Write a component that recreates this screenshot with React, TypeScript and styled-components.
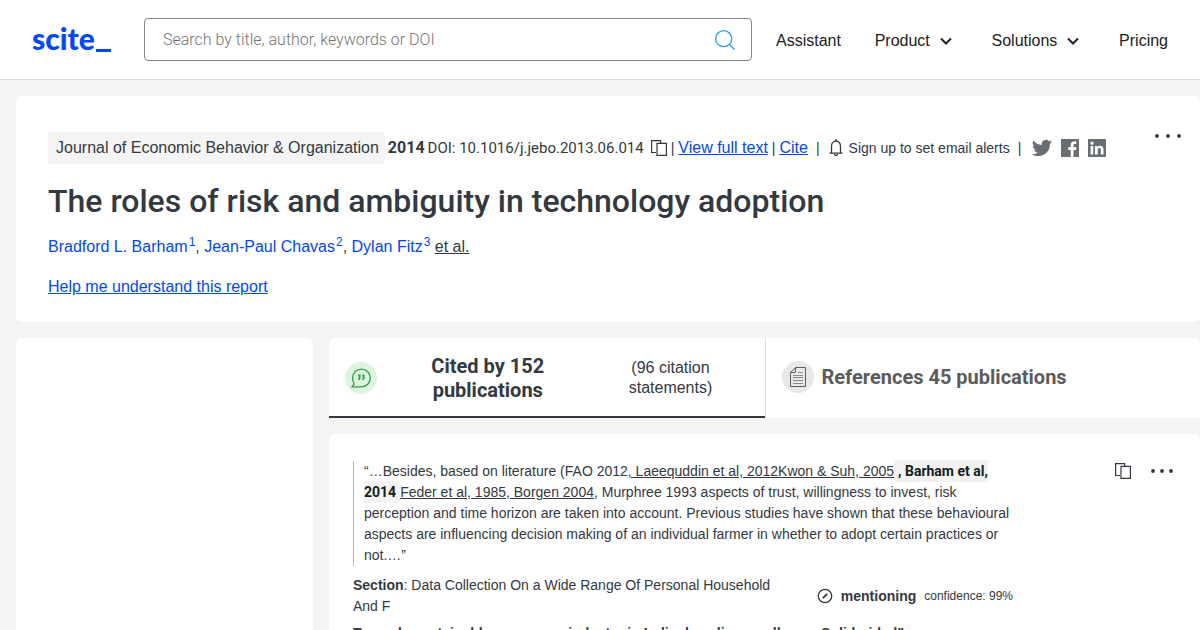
import React from "react";
import styled, { createGlobalStyle, css } from "styled-components";

const GlobalStyle = createGlobalStyle`
  *, *::before, *::after { box-sizing: border-box; }
  html, body, #root { height: 100%; }
  body {
    margin: 0;
    overflow: hidden;
    background: #f4f4f4;
    color: #33393f;
    font-family: "Liberation Sans", Arial, sans-serif;
    font-size: 16px;
    line-height: 24px;
  }
  h1, h2, p, blockquote { margin: 0; }
  a { color: #0047ff; }
  button {
    padding: 0;
    border: 0;
    background: none;
    color: inherit;
    font: inherit;
    cursor: pointer;
  }
  svg { display: block; flex: none; }
`;

const Header = styled.header`
  display: flex;
  align-items: center;
  height: 80px;
  padding: 0 32px;
  background: #fff;
  border-bottom: 1px solid #d9d9d9;
`;

const Logo = styled.a`
  display: flex;
  align-items: flex-end;
  gap: 1px;
  width: 112px;
  padding-bottom: 4px;
  color: #0047ff;
  font-family: Lato, sans-serif;
  font-size: 30px;
  font-weight: 900;
  line-height: 28px;
  text-decoration: none;
  &::after {
    width: 15px;
    height: 3px;
    background: currentColor;
    content: "";
  }
`;

const SearchForm = styled.form`
  display: flex;
  flex: 1;
  align-items: center;
  height: 43px;
  padding: 0 16px 0 18px;
  border: 1px solid #868686;
  border-radius: 4px;
`;

const SearchInput = styled.input`
  flex: 1;
  min-width: 0;
  padding: 0;
  border: 0;
  outline: 0;
  background: none;
  color: #33393f;
  font: 300 16px Roboto, sans-serif;
  &::placeholder { color: #757575; opacity: 1; }
`;

const Nav = styled.nav`
  display: flex;
  flex: 0 0 392px;
  justify-content: space-between;
  margin-left: 24px;
  padding-top: 2px;
`;

const navItem = css`
  display: flex;
  align-items: center;
  gap: 4px;
  color: #222;
  text-decoration: none;
`;
const NavLink = styled.a`${navItem}`;
const NavButton = styled.button`${navItem}`;

const Page = styled.main`
  display: grid;
  grid-template-columns: 297px minmax(0, 1fr);
  gap: 16px;
  padding: 16px 0 0 16px;
`;

const Card = styled.section`
  background: #fff;
  border-radius: 6px;
`;

const ReportCard = styled(Card)`
  display: flex;
  grid-column: 1 / -1;
  align-items: flex-start;
  justify-content: space-between;
  padding: 36px 19px 23px 32px;
`;

const MetaRow = styled.div`
  display: flex;
  align-items: center;
  gap: 3px;
  white-space: nowrap;
`;

const JournalTag = styled.span`
  padding: 4px 6px 4px 8px;
  border-radius: 4px;
  background: #f4f4f4;
`;

const Year = styled.strong`font-family: Roboto, sans-serif;`;

const Doi = styled.span`
  margin-right: 4px;
  font-family: Roboto, sans-serif;
  font-size: 15px;
`;

const Divider = styled.span<{ $wide?: boolean }>`
  margin: ${(p) => (p.$wide ? "0 5px" : "0 1px")};
  font-size: 14px;
`;

const AlertButton = styled.button`
  display: flex;
  align-items: center;
  gap: 5px;
  font-size: 14px;
`;

const Socials = styled.div`
  display: flex;
  gap: 9px;
  margin-left: 3px;
  color: #686e73;
`;

const SocialLink = styled.a`color: inherit;`;

const Title = styled.h1`
  margin-top: 16px;
  font-family: Roboto, sans-serif;
  font-size: 32px;
  font-weight: 500;
  line-height: 42px;
`;

const Authors = styled.p`
  margin-top: 13px;
  a { text-decoration: none; }
  sup { font-size: 12px; line-height: 0; padding-left: 1px; }
`;

const EtAl = styled.button`text-decoration: underline;`;

const Help = styled.p`margin-top: 16px;`;

const Sidebar = styled(Card)`min-height: 400px;`;

const Results = styled.div`
  display: flex;
  flex-direction: column;
  gap: 16px;
`;

const Tabs = styled(Card)`
  display: grid;
  grid-template-columns: 1fr 1fr;
  overflow: hidden;
  border-radius: 6px 6px 0 0;
`;

const Tab = styled.button<{ $active?: boolean }>`
  display: flex;
  align-items: center;
  gap: 8px;
  height: 80px;
  padding: ${(p) => (p.$active ? "2px 16px 0" : "0 16px")};
  color: ${(p) => (p.$active ? "#33393f" : "#5c5c5c")};
  border-bottom: 2px solid ${(p) => (p.$active ? "#33393f" : "transparent")};
  & + & { border-left: 1px solid #dedede; }
`;

const TabIcon = styled.span<{ $tint: string }>`
  display: grid;
  flex: none;
  place-items: center;
  width: 32px;
  height: 32px;
  border-radius: 50%;
  background: ${(p) => p.$tint};
`;

const TabTitle = styled.span<{ $wide?: boolean }>`
  flex: ${(p) => (p.$wide ? "1" : "none")};
  padding: ${(p) => (p.$wide ? "0 32px 0 38px" : "0")};
  font-family: Roboto, sans-serif;
  font-size: 20px;
  font-weight: 700;
`;

const TabNote = styled.span`
  width: 156px;
  padding: 0 24px;
  line-height: 20px;
`;

const Citation = styled(Card)`
  display: flex;
  align-items: flex-start;
  justify-content: space-between;
  padding: 27px 27px 27px 24px;
  font-size: 14px;
  line-height: 21px;
`;

const CitationBody = styled.div`width: 660px;`;

const Quote = styled.blockquote`
  padding-left: 10px;
  border-left: 1px solid #b5b5b5;
  a { color: inherit; }
`;

const Highlight = styled.strong`
  padding: 3px 4px;
  border-radius: 4px;
  background: #f4f2f1;
  color: #0f1f1c;
  font-family: Roboto, sans-serif;
`;

const Details = styled.div`
  display: flex;
  align-items: center;
  justify-content: space-between;
  margin-top: 9px;
`;

const Section = styled.p`width: 420px;`;

const Stance = styled.div`
  display: flex;
  align-items: center;
  gap: 8px;
`;

const Confidence = styled.span`font-size: 12px;`;

const CitingTitle = styled.p`
  margin-top: 6px;
  font-weight: 700;
`;

const Actions = styled.div`
  display: flex;
  align-items: center;
  gap: 20px;
  padding-top: 2px;
`;

const Chevron = () => (
  <svg width="24" height="16" viewBox="0 0 24 16" fill="none" stroke="#222" strokeWidth="2">
    <path d="M7 5.500l5 5 5-5" />
  </svg>
);

const CopyIcon = () => (
  <svg width="16" height="16" viewBox="0 0 16 16" fill="none" stroke="currentColor" strokeWidth="1.2">
    <path d="M5 12.5H.6V.6h9V3" />
    <path d="M6 3.4h9.4v12H6z" />
  </svg>
);

const Dots = ({ size }: { size: number }) => (
  <svg width={size} height="8" viewBox={`0 0 ${size} 8`} fill="#33393f">
    <circle cx="2" cy="4" r="1.900" />
    <circle cx={size / 2} cy="4" r="1.900" />
    <circle cx={size - 2} cy="4" r="1.900" />
  </svg>
);

export default function App() {
  return (
    <>
      <GlobalStyle />
      <Header>
        <Logo href="#">scite</Logo>
        <SearchForm role="search">
          <SearchInput aria-label="Search" placeholder="Search by title, author, keywords or DOI" />
          <button type="button" aria-label="Search">
            <svg width="20" height="20" viewBox="0 0 20 20" fill="none" stroke="#1a9dfa" strokeWidth="1.3">
              <circle cx="8.7" cy="8.7" r="8" />
              <path d="M14.4 14.4l5.2 5.2" />
            </svg>
          </button>
        </SearchForm>
        <Nav>
          <NavLink href="#">Assistant</NavLink>
          <NavButton>Product <Chevron /></NavButton>
          <NavButton>Solutions <Chevron /></NavButton>
          <NavLink href="#">Pricing</NavLink>
        </Nav>
      </Header>
      <Page>
        <ReportCard>
          <div>
            <MetaRow>
              <JournalTag>Journal of Economic Behavior &amp; Organization</JournalTag>
              <Year>2014</Year>
              <Doi>DOI: 10.1016/j.jebo.2013.06.014</Doi>
              <button aria-label="Copy DOI"><CopyIcon /></button>
              <Divider>|</Divider>
              <a href="#">View full text</a>
              <Divider>|</Divider>
              <a href="#">Cite</a>
              <Divider $wide>|</Divider>
              <AlertButton>
                <svg width="16" height="18" viewBox="0 0 16 18" fill="none" stroke="#33393f" strokeWidth="1.3">
                  <path d="M1.500 14.200h13M3.500 14V7a4.500 5 0 019 0v7M8 0v2M6.500 15a1.500 1.500 0 003 0" />
                </svg>
                Sign up to set email alerts
              </AlertButton>
              <Divider $wide>|</Divider>
              <Socials>
                <SocialLink href="#" aria-label="Twitter">
                  <svg width="20" height="18" viewBox="0 2 24 20" fill="currentColor">
                    <path d="M24 4.6a10 10 0 01-2.8.8 5 5 0 002.1-2.7 10 10 0 01-3.1 1.2 4.9 4.9 0 00-8.4 4.5A14 14 0 011.7 3.100a4.900 4.900 0 001.500 6.600 4.900 4.900 0 01-2.200-.6 4.900 4.900 0 003.900 4.900 5 5 0 01-2.200.1 4.900 4.900 0 004.600 3.400A9.900 9.900 0 010 19.500 14 14 0 0021.500 7.100 10 10 0 0024 4.600z" />
                  </svg>
                </SocialLink>
                <SocialLink href="#" aria-label="Facebook">
                  <svg width="18" height="18" viewBox="0 0 18 18">
                    <path fill="currentColor" d="M0 0h18v18h-5.500v-7H15l.4-2.800h-2.900V6.500c0-.9.4-1.400 1.400-1.400h1.500V2.500c-3.400-.6-5.700.6-5.700 3.600v2.100H7.200V11h2.500v7H0z" />
                  </svg>
                </SocialLink>
                <SocialLink href="#" aria-label="LinkedIn">
                  <svg width="18" height="18" viewBox="0 0 18 18">
                    <path fill="currentColor" d="M0 0h18v18H0z" />
                    <path fill="#fff" d="M2.600 7h2.700v8.400H2.600zM7 7h2.500v1.200c1.500-2.300 6-1.900 6 2v5.200h-2.700v-4.500c0-2.600-3.100-2.300-3.100 0v4.500H7z" />
                    <circle cx="4" cy="4.200" r="1.600" fill="#fff" />
                  </svg>
                </SocialLink>
              </Socials>
            </MetaRow>
            <Title>The roles of risk and ambiguity in technology adoption</Title>
            <Authors>
              <a href="#">Bradford L. Barham<sup>1</sup></a>, <a href="#">Jean-Paul Chavas<sup>2</sup></a>,{" "}
              <a href="#">Dylan Fitz<sup>3</sup></a> <EtAl>et al.</EtAl>
            </Authors>
            <Help><a href="#">Help me understand this report</a></Help>
          </div>
          <button aria-label="More options"><Dots size={26} /></button>
        </ReportCard>
        <Sidebar as="aside" />
        <Results>
          <Tabs as="div">
            <Tab $active>
              <TabIcon $tint="#def4e0">
                <svg width="20" height="20" viewBox="0 0 20 20" fill="none" stroke="#2f9e44" strokeWidth="1.3">
                  <path d="M.9 18.900h9.500a8.900 8.900 0 10-8.900-8.900c0 2.500.8 4.500 1.800 6z" />
                  <path strokeWidth="1.800" d="M7.200 7.500h1.500v2q0 1.500-1.300 2.300M11.200 7.500h1.500v2q0 1.500-1.300 2.300" />
                </svg>
              </TabIcon>
              <TabTitle $wide>Cited by 152 publications</TabTitle>
              <TabNote>(96 citation statements)</TabNote>
            </Tab>
            <Tab>
              <TabIcon $tint="#e8e8e8">
                <svg width="16" height="20" viewBox="0 0 16 20" fill="none" stroke="#5c5c5c">
                  <path d="M5.500.5h10v19H.5v-14zM5.500.5v5h-5" />
                  <path stroke="#888" d="M8 5.500h4.500M3 8.500h10M3 10.500h10M3 13.500h10M3 16.500h10" />
                </svg>
              </TabIcon>
              <TabTitle>References 45 publications</TabTitle>
            </Tab>
          </Tabs>
          <Citation as="article">
            <CitationBody>
              <Quote>
                “…Besides, based on literature (FAO 2012<a href="#">, Laeequddin et al, 2012</a><a href="#">Kwon &amp; Suh, 2005</a>
                <Highlight>, Barham et al, 2014</Highlight>
                <a href="#">Feder et al, 1985</a><a href="#">, Borgen 2004</a>, Murphree 1993 aspects of trust, willingness to
                invest, risk perception and time horizon are taken into account. Previous studies have shown that these
                behavioural aspects are influencing decision making of an individual farmer in whether to adopt certain
                practices or not.…”
              </Quote>
              <Details>
                <Section><strong>Section</strong>: Data Collection On a Wide Range Of Personal Household And F</Section>
                <Stance>
                  <svg width="16" height="16" viewBox="0 0 16 16" fill="none" stroke="#33393f" strokeWidth="1.300">
                    <circle cx="8" cy="8" r="6.700" />
                    <path strokeWidth="1.800" d="M5.800 10.200l4.400-4.400" />
                  </svg>
                  <strong>mentioning</strong>
                  <Confidence>confidence: 99%</Confidence>
                </Stance>
              </Details>
              <CitingTitle>Towards sustainable sugarcane industry in India: baseline small area, Solidaridad”</CitingTitle>
            </CitationBody>
            <Actions>
              <button aria-label="Copy"><CopyIcon /></button>
              <button aria-label="More options"><Dots size={22} /></button>
            </Actions>
          </Citation>
        </Results>
      </Page>
    </>
  );
}
